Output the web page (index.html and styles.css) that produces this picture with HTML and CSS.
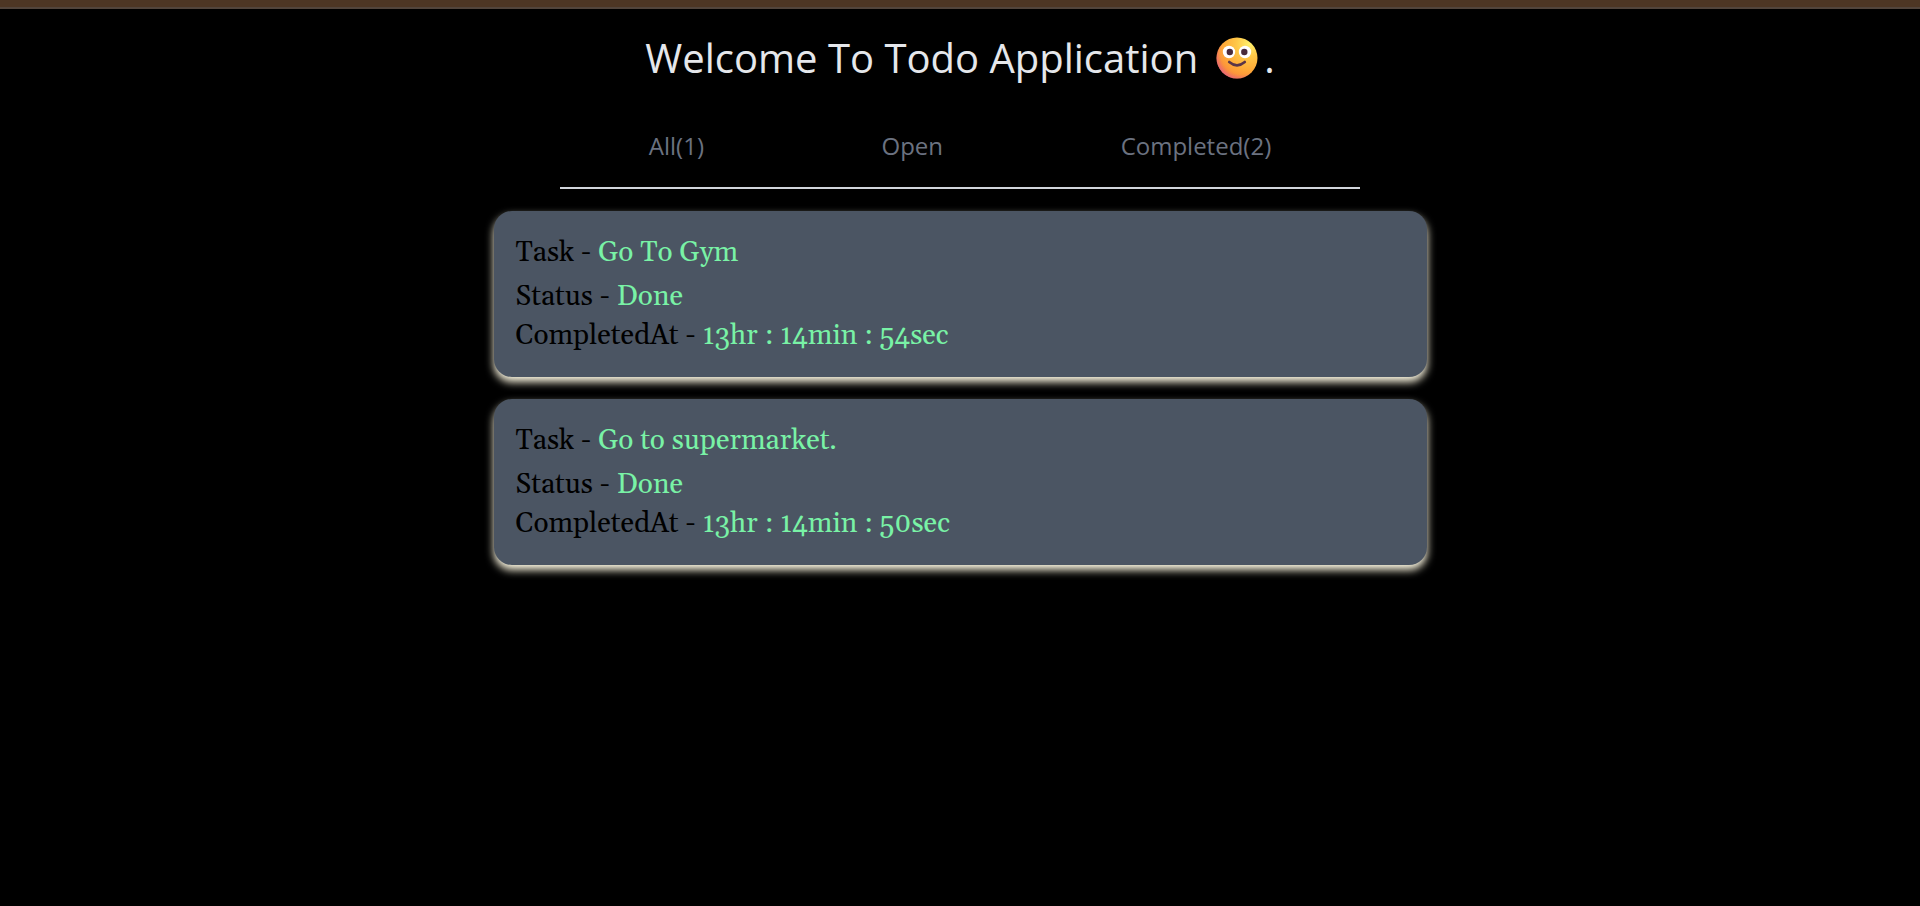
FILE: index.html
```html
<!DOCTYPE html>
<html lang="en">
<head>
  <meta charset="utf-8">
  <meta name="viewport" content="width=device-width, initial-scale=1">
  <title>Todo Application</title>
  <link rel="stylesheet" href="styles.css">
</head>
<body>
  <div class="top-bar"></div>
  <main class="app">
    <h1 class="title">
      <span>Welcome To Todo Application</span>
      <span class="title-end"><svg class="face" viewBox="0 0 42 42" role="img" aria-label="Smiling face">
        <defs>
          <radialGradient id="skin" cx="0.8" cy="0.16" r="0.9">
            <stop offset="0" stop-color="#fff06c"/>
            <stop offset="0.35" stop-color="#ffc747"/>
            <stop offset="0.7" stop-color="#ffaa38"/>
            <stop offset="1" stop-color="#f98a3c"/>
          </radialGradient>
          <radialGradient id="blush" cx="0.62" cy="0.38" r="0.72">
            <stop offset="0.72" stop-color="#ef6a70" stop-opacity="0"/>
            <stop offset="1" stop-color="#d9559c"/>
          </radialGradient>
        </defs>
        <circle cx="21" cy="21" r="20.5" fill="url(#skin)"/>
        <circle cx="21" cy="21" r="20.5" fill="url(#blush)"/>
        <circle cx="13" cy="15" r="6.2" fill="#fff"/>
        <circle cx="29" cy="15" r="6.2" fill="#fff"/>
        <circle cx="13.8" cy="15" r="3.2" fill="#4a2b3b"/>
        <circle cx="28.3" cy="15" r="3.2" fill="#4a2b3b"/>
        <path d="M13.2 25 Q21 31.6 28.8 25" fill="none" stroke="#5a3548" stroke-width="2.6" stroke-linecap="round"/>
      </svg>.</span>
    </h1>
    <nav class="tabs" aria-label="Filter tasks">
      <button class="tab" type="button">All(1)</button>
      <button class="tab" type="button">Open</button>
      <button class="tab" type="button">Completed(2)</button>
    </nav>
    <section class="tasks">
      <article class="card">
        <p class="task">Task - <span class="value">Go To Gym</span></p>
        <p>Status - <span class="value">Done</span></p>
        <p>CompletedAt - <span class="value">13hr : 14min : 54sec</span></p>
      </article>
      <article class="card">
        <p class="task">Task - <span class="value">Go to supermarket.</span></p>
        <p>Status - <span class="value">Done</span></p>
        <p>CompletedAt - <span class="value">13hr : 14min : 50sec</span></p>
      </article>
    </section>
  </main>
</body>
</html>
```

FILE: styles.css
```css
* {
  box-sizing: border-box;
  margin: 0;
}

body {
  background: #000;
  font-family: "Open Sans", "Noto Sans", sans-serif;
}

.top-bar {
  height: 9px;
  background: #4d3624;
  border-bottom: 2px solid #52453c;
}

.app {
  display: flex;
  flex-direction: column;
  align-items: center;
  padding: 19px 16px;
}

.title {
  display: flex;
  flex-wrap: wrap;
  justify-content: center;
  gap: 18px;
  color: #e5e7eb;
  font-size: 40px;
  font-weight: 400;
  line-height: 60px;
}

.title-end {
  display: flex;
  align-items: center;
  gap: 6px;
}

.face {
  width: 42px;
  height: 42px;
}

.tabs {
  display: flex;
  justify-content: space-around;
  width: 100%;
  max-width: 800px;
  margin-top: 35px;
  padding-bottom: 18px;
  border-bottom: 2px solid #d1d5db;
}

.tab {
  padding: 0;
  border: 0;
  background: none;
  color: #6b7280;
  font-family: inherit;
  font-size: 24px;
  line-height: 46px;
  cursor: pointer;
}

.tasks {
  display: grid;
  gap: 22px;
  width: 100%;
  max-width: 933px;
  margin-top: 22px;
}

.card {
  padding: 23px 22px 21px;
  border-radius: 18px;
  background: #4b5563;
  box-shadow: 0 5px 8px #fef9e3;
  color: #000;
  font-family: Georgia, Gelasio, "Liberation Serif", serif;
  font-size: 28px;
  line-height: 39px;
}

.task {
  margin-bottom: 5px;
}

.value {
  color: #79f2a6;
}
```
